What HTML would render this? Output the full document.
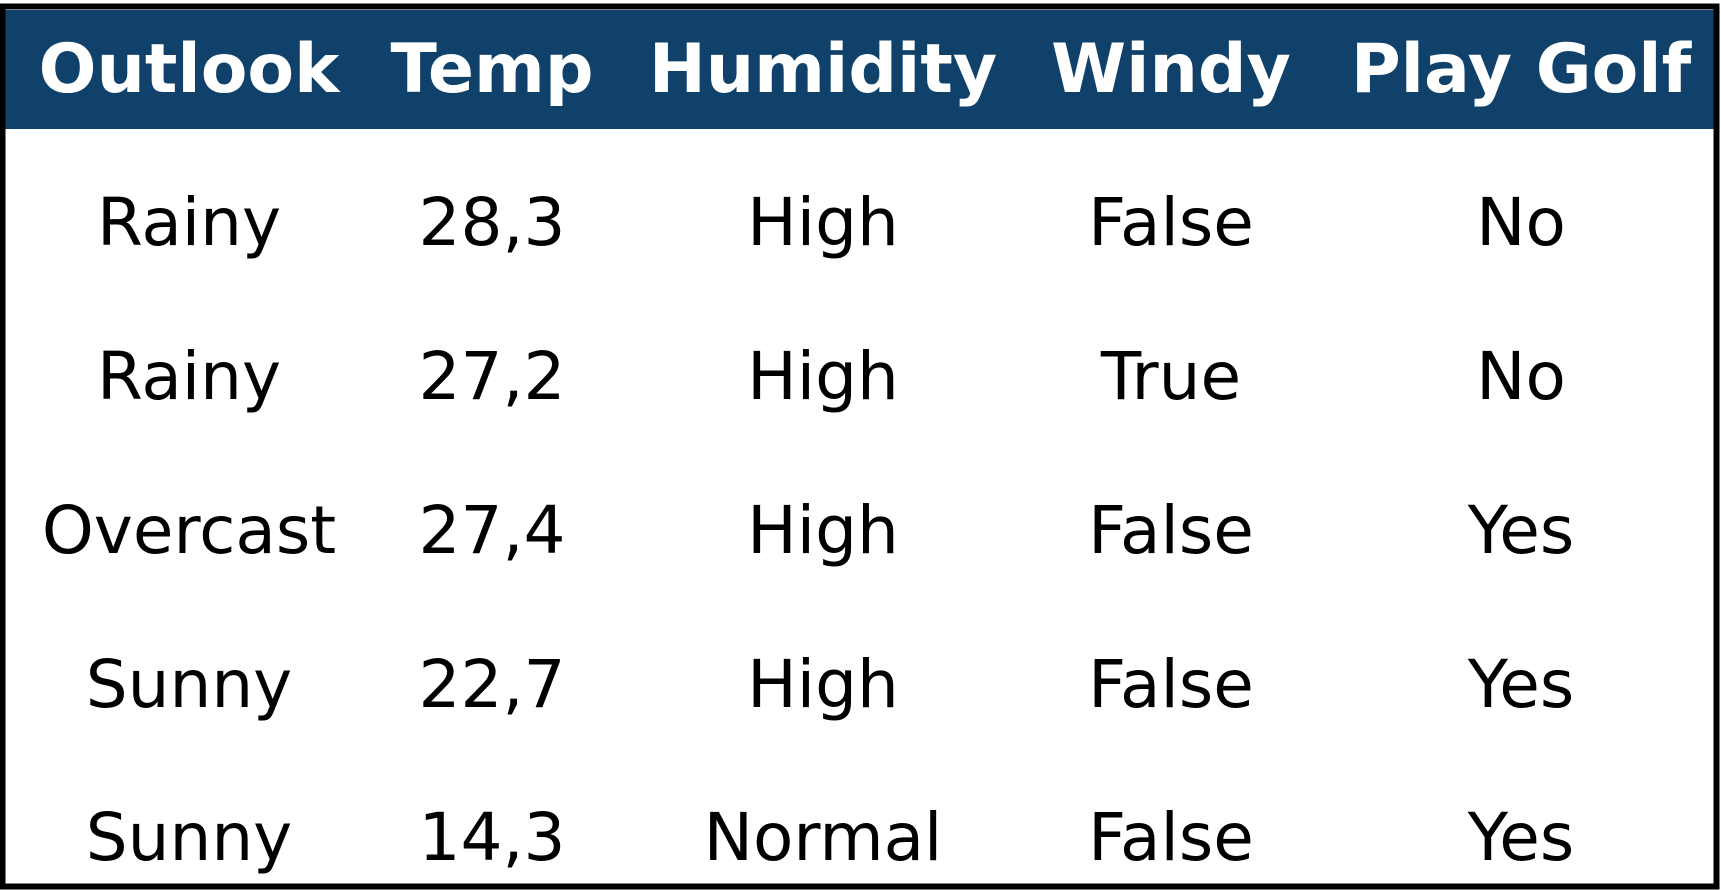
<!DOCTYPE html>
<html><head><meta charset="utf-8"><style>
html,body{margin:0;padding:0;background:#fff;}
svg{display:block;}
text{font-family:"DejaVu Sans","Liberation Sans",sans-serif;text-anchor:middle;}
</style></head><body>
<svg width="1721" height="890" viewBox="0 0 1721 890" xmlns="http://www.w3.org/2000/svg">
<rect x="0" y="0" width="1721" height="890" fill="#fff"/>
<rect x="5" y="10" width="1710" height="119" fill="#10416b"/>
<rect x="2.5" y="6.5" width="1714" height="880" fill="none" stroke="#000" stroke-width="6"/>
<g fill="#fff" font-weight="bold" font-size="68">
<text x="189" y="92">Outlook</text>
<text x="492" y="92">Temp</text>
<text x="823" y="92">Humidity</text>
<text x="1171" y="92">Windy</text>
<text x="1521" y="92">Play Golf</text>
</g>
<g fill="#000" font-size="66">
<text x="189" y="245">Rainy</text><text x="492" y="245">28,3</text><text x="823" y="245">High</text><text x="1171" y="245">False</text><text x="1521" y="245">No</text>
<text x="189" y="399">Rainy</text><text x="492" y="399">27,2</text><text x="823" y="399">High</text><text x="1171" y="399">True</text><text x="1521" y="399">No</text>
<text x="189" y="553">Overcast</text><text x="492" y="553">27,4</text><text x="823" y="553">High</text><text x="1171" y="553">False</text><text x="1521" y="553">Yes</text>
<text x="189" y="707">Sunny</text><text x="492" y="707">22,7</text><text x="823" y="707">High</text><text x="1171" y="707">False</text><text x="1521" y="707">Yes</text>
<text x="189" y="860">Sunny</text><text x="492" y="860">14,3</text><text x="823" y="860">Normal</text><text x="1171" y="860">False</text><text x="1521" y="860">Yes</text>
</g>
</svg>
</body></html>
